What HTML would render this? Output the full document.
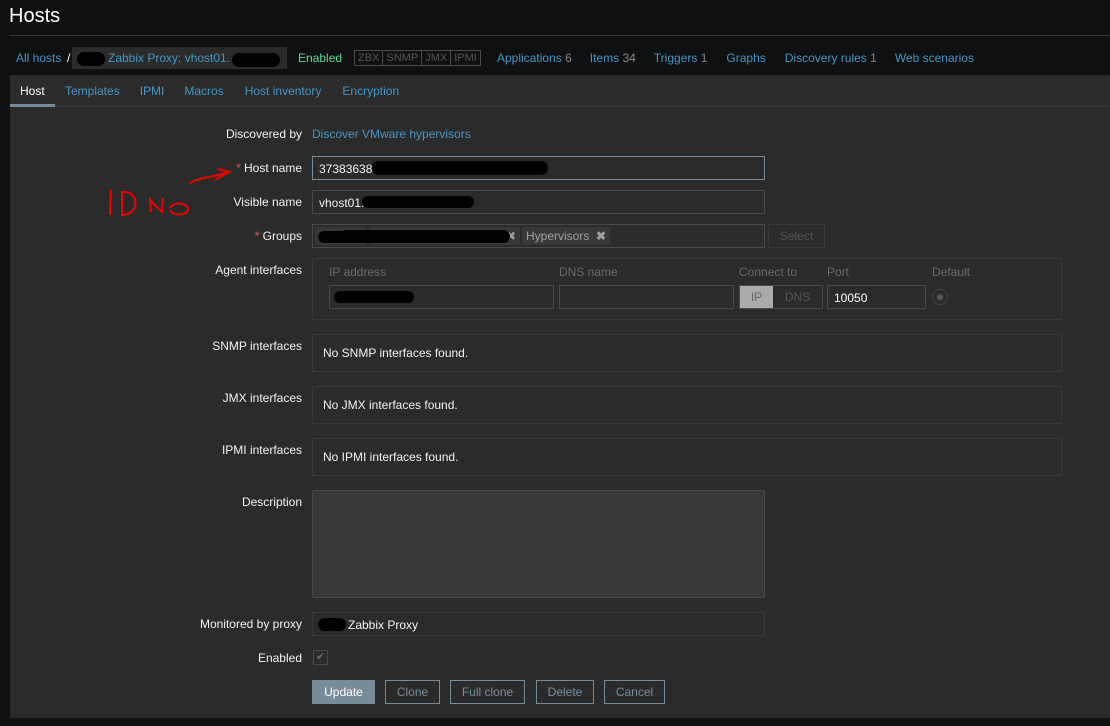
<!DOCTYPE html><html><head><style>
*{box-sizing:border-box;margin:0;padding:0}
body{width:1110px;height:726px;background:#0e1012;font-family:"Liberation Sans",Arial,sans-serif;font-size:12px;color:#f2f2f2;position:relative;overflow:hidden}
.a{position:absolute}
.lnk{color:#4796c4}
.cnt{color:#888}
.lbl{position:absolute;right:808px;text-align:right;color:#f2f2f2}
.inp{position:absolute;left:312px;width:453px;height:24px;border:1px solid #4a4a4a;background:#2b2b2b;padding:5px 6px;color:#f2f2f2}
.box{position:absolute;left:312px;width:750px;border:1px solid #383838;padding:11px 10px}
.btn{position:absolute;top:680px;height:24px;border:1px solid #768d99;color:#768d99;text-align:center;line-height:22px}
.blk{position:absolute;background:#000;border-radius:8px}
.tag{position:absolute;top:227px;height:18px;background:#383838;color:#a0a0a0;padding:2px 4px;border-radius:2px}
</style></head><body>
<div class="a" style="left:9px;top:5px;font-size:20px;color:#fff">Hosts</div>
<div class="a" style="left:9px;top:35px;width:1101px;height:1px;background:#383838"></div>
<div class="a lnk" style="left:16px;top:51px">All hosts</div>
<div class="a" style="left:67px;top:51px;color:#fff">/</div>
<div class="a" style="left:72px;top:47px;width:215px;height:22px;background:#2b2b2b"></div>
<div class="blk" style="left:77px;top:52px;width:28px;height:14px"></div>
<div class="a lnk" style="left:108px;top:51px">Zabbix Proxy: vhost01.</div>
<div class="blk" style="left:232px;top:53px;width:48px;height:14px"></div>
<div class="a" style="left:298px;top:51px;color:#59db8f">Enabled</div>
<div class="a" style="left:354px;top:50px;width:127px;height:16px;border:1px solid #4a4a4a;color:#555;font-size:11px;line-height:14px;display:flex">
<span style="padding:0 3px;border-right:1px solid #4a4a4a">ZBX</span><span style="padding:0 3px;border-right:1px solid #4a4a4a">SNMP</span><span style="padding:0 3px;border-right:1px solid #4a4a4a">JMX</span><span style="padding:0 3px">IPMI</span></div>
<div class="a" style="left:497px;top:51px;white-space:nowrap"><span class="lnk">Applications</span> <span class="cnt">6</span><span class="lnk" style="margin-left:18px">Items</span> <span class="cnt">34</span><span class="lnk" style="margin-left:18px">Triggers</span> <span class="cnt">1</span><span class="lnk" style="margin-left:19px">Graphs</span><span class="lnk" style="margin-left:19px">Discovery rules</span> <span class="cnt">1</span><span class="lnk" style="margin-left:18px">Web scenarios</span></div>
<div class="a" style="left:10px;top:75px;width:1100px;height:643px;background:#2b2b2b"></div>
<div class="a" style="left:10px;top:106px;width:1100px;height:1px;background:#383838"></div>
<div class="a" style="left:10px;top:104px;width:45px;height:3px;background:#768d99"></div>
<div class="a" style="left:20px;top:84px;color:#fff">Host</div>
<div class="a" style="left:65px;top:84px;white-space:nowrap"><span class="lnk">Templates</span><span class="lnk" style="margin-left:20px">IPMI</span><span class="lnk" style="margin-left:20px">Macros</span><span class="lnk" style="margin-left:21px">Host inventory</span><span class="lnk" style="margin-left:21px">Encryption</span></div>
<div class="lbl" style="top:127px">Discovered by</div><div class="a lnk" style="left:312px;top:127px">Discover VMware hypervisors</div>
<div class="lbl" style="top:161px"><span style="color:#e45959">*</span> Host name</div>
<div class="inp" style="top:156px;border-color:#768d99">37383638-</div><div class="blk" style="left:372px;top:161px;width:176px;height:14px"></div>
<div class="lbl" style="top:195px">Visible name</div>
<div class="inp" style="top:190px">vhost01.</div><div class="blk" style="left:362px;top:196px;width:112px;height:12px"></div>
<div class="lbl" style="top:229px"><span style="color:#e45959">*</span> Groups</div>
<div class="inp" style="top:224px"></div>
<div class="tag" style="left:315px;width:51px;text-align:right">✖</div>
<div class="tag" style="left:369px;width:151px;text-align:right">✖</div>
<div class="blk" style="left:318px;top:231px;width:100px;height:12px"></div><div class="blk" style="left:340px;top:230px;width:170px;height:13px"></div>
<div class="tag" style="left:522px">Hypervisors &nbsp;<b>✖</b></div>
<div class="a" style="left:768px;top:224px;width:57px;height:24px;border:1px solid #383838;color:#555;text-align:center;line-height:22px">Select</div>
<div class="lbl" style="top:263px">Agent interfaces</div>
<div class="box" style="top:258px;height:62px;color:#6a6a6a">
<span class="a" style="left:16px;top:6px">IP address</span><span class="a" style="left:246px;top:6px">DNS name</span><span class="a" style="left:426px;top:6px">Connect to</span><span class="a" style="left:514px;top:6px">Port</span><span class="a" style="left:619px;top:6px">Default</span>
<div class="a" style="left:16px;top:26px;width:225px;height:24px;border:1px solid #4a4a4a"></div>
<div class="blk" style="left:21px;top:32px;width:80px;height:12px"></div>
<div class="a" style="left:246px;top:26px;width:175px;height:24px;border:1px solid #4a4a4a"></div>
<div class="a" style="left:426px;top:26px;width:84px;height:24px;border:1px solid #4a4a4a;display:flex;line-height:22px"><span style="background:#aaa;color:#666;width:33px;text-align:center">IP</span><span style="width:49px;text-align:center;color:#555">DNS</span></div>
<div class="a" style="left:514px;top:26px;width:99px;height:24px;border:1px solid #4a4a4a;color:#fff;padding:5px 6px">10050</div>
<div class="a" style="left:619px;top:30px;width:16px;height:16px;border:1px solid #444;border-radius:50%"><div style="margin:4px;width:6px;height:6px;border-radius:50%;background:#555"></div></div>
</div>
<div class="lbl" style="top:339px">SNMP interfaces</div><div class="box" style="top:334px;height:38px">No SNMP interfaces found.</div>
<div class="lbl" style="top:391px">JMX interfaces</div><div class="box" style="top:386px;height:38px">No JMX interfaces found.</div>
<div class="lbl" style="top:443px">IPMI interfaces</div><div class="box" style="top:438px;height:38px">No IPMI interfaces found.</div>
<div class="lbl" style="top:495px">Description</div><div class="inp" style="top:490px;height:108px;background:#383838"></div>
<div class="lbl" style="top:617px">Monitored by proxy</div>
<div class="inp" style="top:612px;border-color:#383838;padding-left:35px">Zabbix Proxy</div><div class="blk" style="left:318px;top:618px;width:28px;height:13px"></div>
<div class="lbl" style="top:651px">Enabled</div>
<div class="a" style="left:313px;top:650px;width:15px;height:15px;border:1px solid #4a4a4a;color:#6a6a6a;font-size:11px;text-align:center;line-height:13px">✔</div>
<div class="btn" style="left:312px;width:63px;background:#768d99;color:#fff">Update</div>
<div class="btn" style="left:385px;width:55px">Clone</div>
<div class="btn" style="left:450px;width:75px">Full clone</div>
<div class="btn" style="left:536px;width:58px">Delete</div>
<div class="btn" style="left:604px;width:61px">Cancel</div>
<svg class="a" style="left:100px;top:160px" width="140" height="60"><g fill="none" stroke="#e00" stroke-width="2"><path d="M11 30 L10 55"/><path d="M22 32 C40 30 40 55 22 55 Z"/><path d="M50 38 L51 52 M50 40 L62 52 L63 38"/><path d="M70 48 C75 40 90 44 88 50 C86 56 72 56 70 50"/><path d="M90 24 C95 18 110 18 125 13 M118 9 L129 12 L115 20"/></g></svg>
</body></html>
